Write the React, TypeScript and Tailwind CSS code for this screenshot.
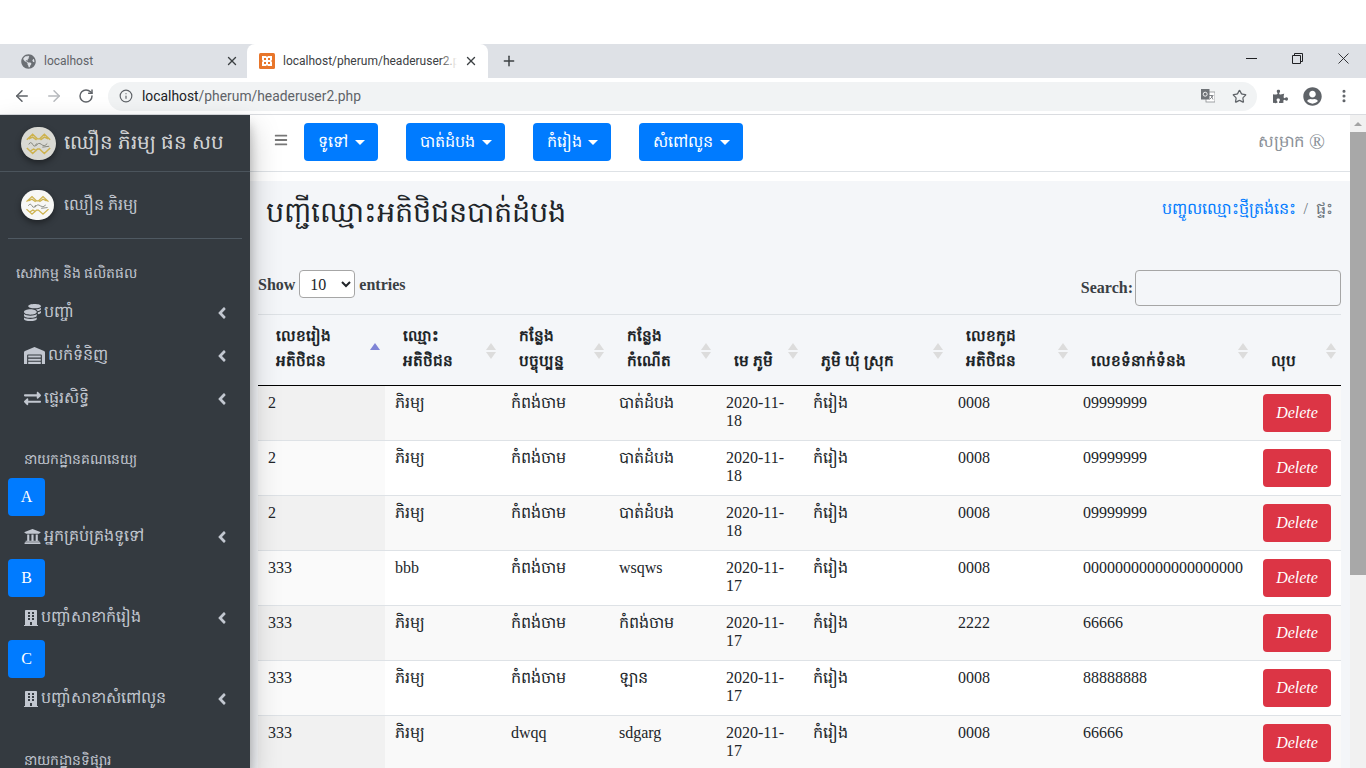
import { ArrowLeft, ArrowRight, RotateCw, Info, Star, X, Plus, EllipsisVertical } from "lucide-react";
import { FaAngleLeft, FaBars, FaBuilding, FaCoins, FaExchangeAlt, FaGlobeAmericas, FaPuzzlePiece, FaUniversity, FaUserCircle, FaWarehouse } from "react-icons/fa";
import type { ReactNode } from "react";

const rows = [
  ["2", "ភិរម្យ", "កំពង់ចាម", "បាត់ដំបង", "2020-11-18", "កំរៀង", "0008", "09999999"],
  ["2", "ភិរម្យ", "កំពង់ចាម", "បាត់ដំបង", "2020-11-18", "កំរៀង", "0008", "09999999"],
  ["2", "ភិរម្យ", "កំពង់ចាម", "បាត់ដំបង", "2020-11-18", "កំរៀង", "0008", "09999999"],
  ["333", "bbb", "កំពង់ចាម", "wsqws", "2020-11-17", "កំរៀង", "0008", "00000000000000000000"],
  ["333", "ភិរម្យ", "កំពង់ចាម", "កំពង់ចាម", "2020-11-17", "កំរៀង", "2222", "66666"],
  ["333", "ភិរម្យ", "កំពង់ចាម", "ឡាន", "2020-11-17", "កំរៀង", "0008", "88888888"],
  ["333", "ភិរម្យ", "dwqq", "sdgarg", "2020-11-17", "កំរៀង", "0008", "66666"],
];

const headers = [
  { lines: ["លេខរៀង", "អតិថិជន"], w: "w-[127px]", sorted: true },
  { lines: ["ឈ្មោះ", "អតិថិជន"], w: "w-[116px]" },
  { lines: ["កន្លែង", "បច្ចុប្បន្ន"], w: "w-[108px]" },
  { lines: ["កន្លែង", "កំណើត"], w: "w-[107px]" },
  { lines: ["មេ ភូមិ"], w: "w-[87px]" },
  { lines: ["ភូមិ ឃុំ ស្រុក"], w: "w-[145px]" },
  { lines: ["លេខកូដ", "អតិថិជន"], w: "w-[125px]" },
  { lines: ["លេខទំនាក់ទំនង"], w: "w-[180px]" },
  { lines: ["លុប"], w: "w-[88px]" },
];

function Logo({ className, fill }: { className: string; fill: string }) {
  return (
    <svg viewBox="0 0 36 36" preserveAspectRatio="none" className={`${className} shrink-0 rounded-full shadow-[0_3px_6px_rgba(0,0,0,0.4)]`}>
      <rect width="36" height="36" fill={fill} />
      <path d="M6 14 L12 8 L17 13 L19 13 L24 8 L30 14 M8 13 L12 11 L16 14 M20 14 L24 11 L28 13" fill="none" stroke="#cdb24e" strokeWidth="1.5" />
      <path d="M6 23 L12 29 L17 24 L19 24 L24 29 L30 23 M10 26 L13 24 L16 26" fill="none" stroke="#cdb24e" strokeWidth="1.5" />
      <path d="M8 19 Q10 15 12 19 T16 18 M15 21 Q18 16 21 19 T27 18 M22 22 L29 21" fill="none" stroke="#77796f" strokeWidth="0.9" />
    </svg>
  );
}

function NavItem({ icon, label, gap = "mr-[3px]", lift = "" }: { icon: ReactNode; label: string; gap?: string; lift?: string }) {
  return (
    <div className={`flex h-[43px] shrink-0 items-center pl-[24px] pr-[19px] text-[16px] text-[#c2c7d0] ${lift}`}>
      <span className={`${gap} flex items-center`}>{icon}</span>
      <span className="-translate-y-[1px]">{label}</span>
      <FaAngleLeft className="ml-auto text-[18px]" />
    </div>
  );
}

function Letter({ children }: { children: string }) {
  return (
    <div className="ml-[8px] flex h-[38px] w-[37px] shrink-0 items-center justify-center rounded-[4px] bg-[#007bff] text-[16px] text-white">
      {children}
    </div>
  );
}

function Sidebar() {
  return (
    <aside className="relative z-10 flex w-[250px] shrink-0 flex-col overflow-hidden bg-[#343a40] shadow-[0_14px_28px_rgba(0,0,0,0.25),0_10px_10px_rgba(0,0,0,0.22)]">
      <div className="flex h-[57px] shrink-0 items-center border-b border-[#4b545c] pl-[21px] text-[19.85px] text-[rgba(255,255,255,0.8)]">
        <Logo className="h-[33px] w-[35px]" fill="#d9d9d3" />
        <span className="ml-[8px]">ឈឿន ភិរម្យ ផន សប</span>
      </div>
      <div className="mx-[8px] flex h-[67px] shrink-0 items-center border-b border-[#4f5962] pl-[13px] text-[16px] text-[#c2c7d0]">
        <Logo className="h-[30px] w-[33px]" fill="#f7f7f5" />
        <span className="ml-[10px]">ឈឿន ភិរម្យ</span>
      </div>
      <div className="shrink-0 pl-[16px] pt-[23px] text-[14px] leading-[24px] text-[#c2c7d0]">សេវាកម្ម និង ផលិតផល</div>
      <div className="mt-[5px] shrink-0">
        <NavItem icon={<FaCoins className="text-[17px]" />} label="បញ្ចាំ" />
        <NavItem icon={<FaWarehouse className="text-[21px]" />} label="លក់ទំនិញ" />
        <NavItem icon={<FaExchangeAlt className="text-[17px]" />} label="ផ្ទេរសិទ្ធិ" />
      </div>
      <div className="shrink-0 pl-[24px] pt-[28px] text-[14px] leading-[24px] text-[#c2c7d0]">នាយកដ្ឋានគណនេយ្យ</div>
      <div className="mt-[6px] shrink-0"><Letter>A</Letter></div>
      <NavItem icon={<FaUniversity className="text-[17px]" />} label="អ្នកគ្រប់គ្រងទូទៅ" lift="pb-[2px]" />
      <Letter>B</Letter>
      <NavItem icon={<FaBuilding className="-ml-[1px] text-[16px]" />} label="បញ្ចាំសាខាកំរៀង" gap="mr-[2px]" lift="pb-[2px]" />
      <Letter>C</Letter>
      <NavItem icon={<FaBuilding className="-ml-[1px] text-[16px]" />} label="បញ្ចាំសាខាសំពៅលូន" gap="mr-[2px]" lift="pb-[2px]" />
      <div className="shrink-0 pl-[24px] pt-[28px] text-[14px] leading-[24px] text-[#c2c7d0]">នាយកដ្ឋានទិផ្សារ</div>
    </aside>
  );
}

function DropBtn({ label, w }: { label: string; w: string }) {
  return (
    <button className={`${w} flex h-[38px] items-center justify-between rounded-[4px] bg-[#007bff] pl-[14px] pr-[13px] text-[16px] text-white`}>
      {label}
      <span className="h-0 w-0 border-x-[5px] border-t-[5px] border-x-transparent border-t-white" />
    </button>
  );
}

function Topnav() {
  return (
    <div className="flex h-[57px] shrink-0 items-start gap-[28px] border-b border-[#dee2e6] bg-white pl-[24px] pr-[25px] pt-[8px]">
      <div className="mr-[-12px] flex h-[34px] items-center">
        <FaBars className="text-[14px] text-[#777]" />
      </div>
      <DropBtn label="ទូទៅ" w="w-[74px]" />
      <DropBtn label="បាត់ដំបង" w="w-[99px]" />
      <DropBtn label="កំរៀង" w="w-[78px]" />
      <DropBtn label="សំពៅលូន" w="w-[104px]" />
      <span className="ml-auto flex h-[38px] items-center gap-[5px] text-[16.5px] text-[#8a9097]">
        សម្រាក
        <span className="text-[21px] leading-none">®</span>
      </span>
    </div>
  );
}

function SortMark({ sorted }: { sorted?: boolean }) {
  return (
    <span className="absolute right-[5px] top-[28px] flex flex-col gap-[2px]">
      <span className={`h-0 w-0 border-x-[5px] border-b-[7px] border-x-transparent ${sorted ? "border-b-[#7f84d6]" : "border-b-[#dcdcdc]"}`} />
      <span className={`h-0 w-0 border-x-[5px] border-t-[7px] border-x-transparent ${sorted ? "border-t-transparent" : "border-t-[#dcdcdc]"}`} />
    </span>
  );
}

function Table() {
  return (
    <table className="w-[1083px] table-fixed border-collapse border-t border-[#dee2e6] text-[16px] text-[#212529]">
      <colgroup>
        {headers.map((h, i) => <col key={i} className={h.w} />)}
      </colgroup>
      <thead>
        <tr className="h-[71px] border-b border-black">
          {headers.map((h, i) => (
            <th key={i} className="relative px-[18px] pb-[12px] align-bottom text-left text-[15.3px] font-bold leading-[25px]">
              {h.lines.map((l) => <div key={l}>{l}</div>)}
              <SortMark sorted={h.sorted} />
            </th>
          ))}
        </tr>
      </thead>
      <tbody>
        {rows.map((r, i) => (
          <tr key={i} className={`h-[55px] border-b border-[#dee2e6] ${i % 2 === 0 ? "bg-[#f9f9f9]" : "bg-white"}`}>
            {r.map((c, j) => (
              <td key={j} className={`px-[10px] pt-[8px] align-top leading-[18px] ${j === 0 ? (i % 2 === 0 ? "bg-[#f1f1f1]" : "bg-[#fafafa]") : ""}`}>
                {c}
              </td>
            ))}
            <td className="px-[10px] align-middle">
              <button className="flex h-[38px] w-[68px] items-center justify-center rounded-[4px] bg-[#dc3545] text-[16px] italic text-white">Delete</button>
            </td>
          </tr>
        ))}
      </tbody>
    </table>
  );
}

function Chrome() {
  return (
    <div className="shrink-0 font-['Roboto',sans-serif] text-[#3c4043]">
      <div className="flex h-[34px] items-end bg-[#dee1e6]">
        <div className="flex h-[34px] w-[247px] items-center pl-[21px] pr-[8px] text-[12px] text-[#5f6368]">
          <FaGlobeAmericas size={15} className="text-[#6b6f74]" />
          <span className="ml-[8px]">localhost</span>
          <X size={14} strokeWidth={2.4} className="ml-auto text-[#3c4043]" />
        </div>
        <div className="flex h-[34px] w-[241px] items-center rounded-t-[8px] bg-white pl-[12px] pr-[10px] text-[12px]">
          <svg viewBox="0 0 16 16" className="h-[16px] w-[16px] shrink-0">
            <rect width="16" height="16" rx="1.5" fill="#e8762b" />
            <path d="M3 3h4l1 1 1-1h4v4l-1 1 1 1v4H9l-1-1-1 1H3V9l1-1-1-1z" fill="#fff" />
            <rect x="5" y="5" width="2" height="2" fill="#e8762b" />
            <rect x="9" y="5" width="2" height="2" fill="#e8762b" />
            <rect x="5" y="9" width="2" height="2" fill="#e8762b" />
            <rect x="9" y="9" width="2" height="2" fill="#e8762b" />
          </svg>
          <span className="relative ml-[8px] w-[174px] overflow-hidden whitespace-nowrap">
            localhost/pherum/headeruser2.php
            <span className="absolute right-0 top-0 h-full w-[16px] bg-gradient-to-r from-transparent to-white" />
          </span>
          <X size={14} strokeWidth={2.4} className="ml-auto" />
        </div>
        <div className="flex h-[34px] items-center pl-[13px]">
          <Plus size={16} strokeWidth={2.2} />
        </div>
        <div className="ml-auto flex h-[34px] items-start gap-[35px] pr-[17px] pt-[9px] text-[#202124]">
          <svg viewBox="0 0 11 11" className="h-[11px] w-[11px]"><path d="M0 5.500h11" stroke="currentColor" /></svg>
          <svg viewBox="0 0 11 11" className="h-[11px] w-[11px]"><path d="M.5 2.500h8v8h-8zM2.500 2.500V.5h8v8h-2" fill="none" stroke="currentColor" /></svg>
          <svg viewBox="0 0 11 11" className="h-[11px] w-[11px]"><path d="M.5.5l10 10M10.500.5l-10 10" fill="none" stroke="currentColor" strokeWidth="0.9" /></svg>
        </div>
      </div>
      <div className="flex h-[37px] items-center border-b border-[#dadce0] bg-white">
        <ArrowLeft size={18} strokeWidth={2} className="ml-[13px] text-[#5f6368]" />
        <ArrowRight size={18} strokeWidth={2} className="ml-[14px] text-[#b6b9bd]" />
        <RotateCw size={16} strokeWidth={2.2} className="ml-[15px] text-[#5f6368]" />
        <div className="ml-[14px] flex h-[29px] w-[1149px] items-center rounded-full bg-[#f1f3f4] pl-[11px] pr-[10px] text-[13.85px]">
          <Info size={14} strokeWidth={2} className="text-[#5f6368]" />
          <span className="ml-[9px] text-[#202124]">localhost<span className="text-[#5f6368]">/pherum/headeruser2.php</span></span>
          <svg viewBox="0 0 14 14" className="ml-auto h-[14px] w-[14px]">
            <rect x="5" y="3" width="9" height="10" fill="#fff" stroke="#8a8d91" strokeWidth="0.8" />
            <rect width="8.500" height="10.500" fill="#707478" />
            <circle cx="4.200" cy="5.200" r="2" fill="none" stroke="#fff" strokeWidth="0.9" />
            <path d="M8 6.500h4.500M10 6l2 4.500M12 7l-3.500 3.500" fill="none" stroke="#707478" strokeWidth="0.8" />
          </svg>
          <Star size={15} strokeWidth={2} className="ml-[17px] text-[#5f6368]" />
        </div>
        <FaPuzzlePiece size={15} className="ml-[16px] text-[#5f6368]" />
        <FaUserCircle size={19} className="ml-[15px] text-[#5f6368]" />
        <EllipsisVertical size={16} strokeWidth={2.6} className="ml-[14px] text-[#5f6368]" />
      </div>
    </div>
  );
}

export default function App() {
  return (
    <div className="flex h-[768px] w-[1366px] flex-col overflow-hidden bg-white font-['Liberation_Serif','Noto_Sans',serif]">
      <div className="h-[44px] shrink-0 bg-white" />
      <Chrome />
      <div className="flex min-h-0 flex-1">
        <Sidebar />
        <div className="flex min-w-0 flex-1 flex-col">
          <Topnav />
          <div className="h-[9px] shrink-0 bg-white" />
          <main className="flex-1 overflow-hidden bg-[#f4f6f9] pl-[8px] pr-[9px]">
            <div className="flex h-[70px] items-center justify-between pl-[8px] pr-[8px]">
              <h1 className="pb-[6px] text-[28.7px] text-[#212529]">បញ្ជីឈ្មោះអតិថិជនបាត់ដំបង</h1>
              <div className="pb-[14px] text-[16px] text-[#6c757d]">
                <span className="text-[#007bff]">បញ្ចូលឈ្មោះថ្មីត្រង់នេះ</span>
                <span className="mx-[8px]">/</span>
                <span>ផ្ទះ</span>
              </div>
            </div>
            <div className="flex h-[63px] items-start justify-between pt-[19px] text-[16px] font-bold text-[#3a3f44]">
              <label className="flex h-[28px] items-center">
                <span className="pt-[2px]">Show</span>
                <select className="mx-[4px] h-[28px] w-[56px] rounded-[4px] border border-[#a6a6a6] bg-white pl-[6px] text-[16px] font-normal text-[#212529]">
                  <option>10</option>
                </select>
                <span className="pt-[2px]">entries</span>
              </label>
              <label className="flex items-center">
                Search:
                <input className="ml-[2px] h-[36px] w-[206px] rounded-[4px] border border-[#a6a6a6] bg-transparent" />
              </label>
            </div>
            <Table />
          </main>
        </div>
        <div className="flex w-[16px] shrink-0 flex-col bg-[#f1f1f1]">
          <div className="flex h-[17px] items-center justify-center">
            <span className="h-0 w-0 border-x-[4px] border-b-[4px] border-x-transparent border-b-[#a3a3a3]" />
          </div>
          <div className="h-[443px] bg-[#a8a8a8]" />
        </div>
      </div>
    </div>
  );
}
